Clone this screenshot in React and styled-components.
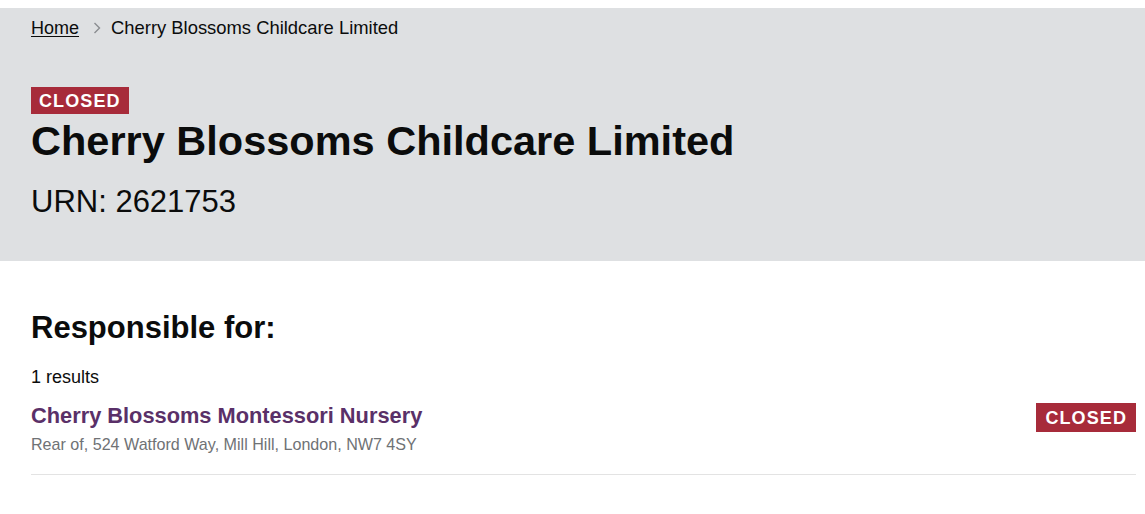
import styled, { createGlobalStyle } from "styled-components";

const GlobalStyle = createGlobalStyle`
  body {
    margin: 0;
    background: #ffffff;
    font-family: "Liberation Sans", Arial, sans-serif;
    color: #0b0c0c;
  }
`;

const Page = styled.div`
  padding-top: 8px;
`;

const Hero = styled.header`
  background-color: #dee0e2;
  padding: 9px 9px 41px 31px;
`;

const Breadcrumbs = styled.nav`
  display: flex;
  align-items: center;
  font-size: 18px;
  line-height: 22px;
`;

const CrumbLink = styled.a`
  color: #0b0c0c;
  text-decoration: underline;
  text-underline-offset: 2px;
  text-decoration-thickness: 1px;
`;

const CrumbCurrent = styled.span`
  font-size: 18.4px;
`;

const Chevron = styled.svg`
  width: 8px;
  height: 12px;
  margin: 0 10px 0 14px;
`;

const Badge = styled.span`
  display: inline-block;
  background-color: #a72b3a;
  color: #ffffff;
  font-size: 18px;
  font-weight: 700;
  line-height: 20px;
  letter-spacing: 1.1px;
  padding: ${(p) => (p.$tall ? "5px 9px 4px 9px" : "4px 8px 3px 8px")};
  text-transform: uppercase;
`;

const StatusWrap = styled.div`
  margin-top: 48px;
  display: flex;
`;

const Title = styled.h1`
  margin: 2px 0 0;
  font-size: 41.5px;
  line-height: 1.2;
  font-weight: 700;
`;

const Urn = styled.p`
  margin: 17px 0 0;
  font-size: 31px;
  line-height: 1.2;
  font-weight: 400;
`;

const Main = styled.main`
  padding: 0 9px 0 31px;
`;

const SectionTitle = styled.h2`
  margin: 48px 0 0;
  font-size: 31px;
  line-height: 1.2;
  font-weight: 700;
`;

const Count = styled.p`
  margin: 20px 0 0;
  font-size: 18px;
  line-height: 22px;
`;

const ResultRow = styled.div`
  margin-top: 15px;
  display: flex;
  justify-content: space-between;
  align-items: flex-start;
  padding-bottom: 20px;
  border-bottom: 1px solid #e3e3e3;
`;

const ResultInfo = styled.div`
  display: flex;
  flex-direction: column;
`;

const ResultLink = styled.a`
  color: #5a3068;
  font-size: 21.8px;
  line-height: 1.2;
  font-weight: 700;
  text-decoration: none;
`;

const Address = styled.p`
  margin: 5px 0 0;
  color: #6f7275;
  font-size: 16.1px;
  line-height: 20px;
`;

export default function App() {
  return (
    <Page>
      <GlobalStyle />
      <Hero>
        <Breadcrumbs>
          <CrumbLink href="#">Home</CrumbLink>
          <Chevron viewBox="0 0 8 12" fill="none">
            <path d="M1.5 1 L6.5 6 L1.5 11" stroke="#8a8d90" strokeWidth="1.4" />
          </Chevron>
          <CrumbCurrent>Cherry Blossoms Childcare Limited</CrumbCurrent>
        </Breadcrumbs>
        <StatusWrap>
          <Badge>Closed</Badge>
        </StatusWrap>
        <Title>Cherry Blossoms Childcare Limited</Title>
        <Urn>URN: 2621753</Urn>
      </Hero>
      <Main>
        <SectionTitle>Responsible for:</SectionTitle>
        <Count>1 results</Count>
        <ResultRow>
          <ResultInfo>
            <ResultLink href="#">Cherry Blossoms Montessori Nursery</ResultLink>
            <Address>Rear of, 524 Watford Way, Mill Hill, London, NW7 4SY</Address>
          </ResultInfo>
          <Badge $tall>Closed</Badge>
        </ResultRow>
      </Main>
    </Page>
  );
}
